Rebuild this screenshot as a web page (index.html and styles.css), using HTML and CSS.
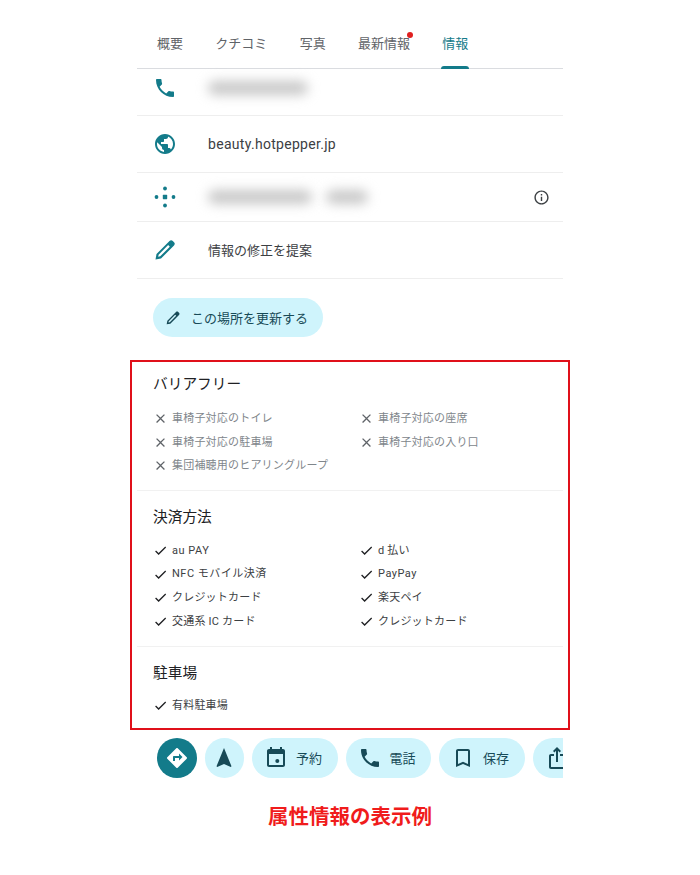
FILE: index.html
```html
<!DOCTYPE html>
<html lang="ja">
  <head>
    <meta charset="UTF-8" />
    <title>属性情報の表示例</title>
    <link rel="stylesheet" href="styles.css">
  </head>
  <body>
    <div class="page">
      <!-- タブ -->
      <nav class="tabs">
        <a href="#">概要</a>
        <a href="#">クチコミ</a>
        <a href="#">写真</a>
        <a href="#" class="has-dot">最新情報</a>
        <a href="#" class="active">情報</a>
      </nav>

      <!-- 基本情報 -->
      <ul class="rows">
        <li class="row row-phone">
          <svg class="row-icon" viewBox="0 0 24 24"><path d="M6.62 10.79c1.44 2.83 3.76 5.14 6.59 6.59l2.2-2.2c.27-.27.67-.36 1.02-.24 1.12.37 2.33.57 3.57.57.55 0 1 .45 1 1V20c0 .55-.45 1-1 1-9.39 0-17-7.61-17-17 0-.55.45-1 1-1h3.5c.55 0 1 .45 1 1 0 1.25.2 2.45.57 3.57.11.35.03.74-.25 1.02l-2.2 2.2z"/></svg>
          <span class="blur blur-a"></span>
        </li>
        <li class="row row-web">
          <svg class="row-icon" viewBox="0 0 24 24"><path d="M12 2C6.48 2 2 6.48 2 12s4.48 10 10 10 10-4.48 10-10S17.52 2 12 2zm-1 17.93c-3.95-.49-7-3.85-7-7.93 0-.62.08-1.21.21-1.79L9 15v1c0 1.1.9 2 2 2v1.93zm6.9-2.54c-.26-.81-1-1.39-1.9-1.39h-1v-3c0-.55-.45-1-1-1H8v-2h2c.55 0 1-.45 1-1V7h2c1.1 0 2-.9 2-2v-.41c2.93 1.19 5 4.06 5 7.41 0 2.08-.8 3.97-2.1 5.39z"/></svg>
          <span class="row-text latin">beauty.hotpepper.jp</span>
        </li>
        <li class="row row-code">
          <svg class="row-icon" viewBox="0 0 24 24"><circle cx="12" cy="3.5" r="1.9"/><circle cx="3.5" cy="12" r="1.9"/><circle cx="20.5" cy="12" r="1.9"/><circle cx="12" cy="20.5" r="1.9"/><rect x="9.8" y="9.8" width="4.4" height="4.4" rx=".6"/></svg>
          <span class="blur blur-b"></span>
          <span class="blur blur-c"></span>
          <svg class="info-icon" viewBox="0 0 24 24"><path d="M11 7h2v2h-2zm0 4h2v6h-2zm1-9C6.48 2 2 6.48 2 12s4.48 10 10 10 10-4.48 10-10S17.52 2 12 2zm0 18c-4.41 0-8-3.59-8-8s3.59-8 8-8 8 3.59 8 8-3.59 8-8 8z"/></svg>
        </li>
        <li class="row row-edit">
          <svg class="row-icon" viewBox="0 0 24 24"><path fill-rule="evenodd" d="M2.5 21.5L3.5 16 16.5 3c1-1 2.3-1 3.3 0L21 4.2c1 1 1 2.3 0 3.3L8 20.5zM5.2 18.8l2-.5 9.6-9.6-1.6-1.6-9.6 9.6z"/></svg>
          <span class="row-text">情報の修正を提案</span>
        </li>
      </ul>

      <a href="#" class="update-btn">
        <svg viewBox="0 0 24 24"><path fill-rule="evenodd" d="M2.5 21.5L3.5 16 16.5 3c1-1 2.3-1 3.3 0L21 4.2c1 1 1 2.3 0 3.3L8 20.5zM5.2 18.8l2-.5 9.6-9.6-1.6-1.6-9.6 9.6z"/></svg>
        この場所を更新する
      </a>

      <!-- 属性情報(赤枠) -->
      <div class="attr-box">
        <section class="attr attr-first">
          <h2>バリアフリー</h2>
          <ul class="attr-list off">
            <li><svg viewBox="0 0 24 24"><path d="M19 6.41L17.59 5 12 10.59 6.41 5 5 6.41 10.59 12 5 17.59 6.41 19 12 13.41 17.59 19 19 17.59 13.41 12z"/></svg>車椅子対応のトイレ</li>
            <li><svg viewBox="0 0 24 24"><path d="M19 6.41L17.59 5 12 10.59 6.41 5 5 6.41 10.59 12 5 17.59 6.41 19 12 13.41 17.59 19 19 17.59 13.41 12z"/></svg>車椅子対応の座席</li>
            <li><svg viewBox="0 0 24 24"><path d="M19 6.41L17.59 5 12 10.59 6.41 5 5 6.41 10.59 12 5 17.59 6.41 19 12 13.41 17.59 19 19 17.59 13.41 12z"/></svg>車椅子対応の駐車場</li>
            <li><svg viewBox="0 0 24 24"><path d="M19 6.41L17.59 5 12 10.59 6.41 5 5 6.41 10.59 12 5 17.59 6.41 19 12 13.41 17.59 19 19 17.59 13.41 12z"/></svg>車椅子対応の入り口</li>
            <li><svg viewBox="0 0 24 24"><path d="M19 6.41L17.59 5 12 10.59 6.41 5 5 6.41 10.59 12 5 17.59 6.41 19 12 13.41 17.59 19 19 17.59 13.41 12z"/></svg>集団補聴用のヒアリングループ</li>
          </ul>
        </section>
        <section class="attr attr-pay">
          <h2>決済方法</h2>
          <ul class="attr-list">
            <li><svg viewBox="0 0 24 24"><path d="M9 16.17L4.83 12l-1.42 1.41L9 19 21 7l-1.41-1.41z"/></svg><span class="wide">au PAY</span></li>
            <li><svg viewBox="0 0 24 24"><path d="M9 16.17L4.83 12l-1.42 1.41L9 19 21 7l-1.41-1.41z"/></svg>d 払い</li>
            <li><svg viewBox="0 0 24 24"><path d="M9 16.17L4.83 12l-1.42 1.41L9 19 21 7l-1.41-1.41z"/></svg><span class="wide">NFC モバイル決済</span></li>
            <li><svg viewBox="0 0 24 24"><path d="M9 16.17L4.83 12l-1.42 1.41L9 19 21 7l-1.41-1.41z"/></svg><span class="wide">PayPay</span></li>
            <li><svg viewBox="0 0 24 24"><path d="M9 16.17L4.83 12l-1.42 1.41L9 19 21 7l-1.41-1.41z"/></svg>クレジットカード</li>
            <li><svg viewBox="0 0 24 24"><path d="M9 16.17L4.83 12l-1.42 1.41L9 19 21 7l-1.41-1.41z"/></svg>楽天ペイ</li>
            <li><svg viewBox="0 0 24 24"><path d="M9 16.17L4.83 12l-1.42 1.41L9 19 21 7l-1.41-1.41z"/></svg>交通系 IC カード</li>
            <li><svg viewBox="0 0 24 24"><path d="M9 16.17L4.83 12l-1.42 1.41L9 19 21 7l-1.41-1.41z"/></svg>クレジットカード</li>
          </ul>
        </section>
        <section class="attr attr-last">
          <h2>駐車場</h2>
          <ul class="attr-list">
            <li><svg viewBox="0 0 24 24"><path d="M9 16.17L4.83 12l-1.42 1.41L9 19 21 7l-1.41-1.41z"/></svg>有料駐車場</li>
          </ul>
        </section>
      </div>

      <!-- 下部アクション -->
      <div class="actions">
        <a href="#" class="act act-round act-main">
          <svg viewBox="0 0 24 24"><path d="M21.71 11.29l-9-9c-.39-.39-1.02-.39-1.41 0l-9 9c-.39.39-.39 1.02 0 1.41l9 9c.39.39 1.02.39 1.41 0l9-9c.39-.38.39-1.01 0-1.41zM14 14.5V12h-4v3H8v-4c0-.55.45-1 1-1h5V7.5l3.5 3.5-3.5 3.5z"/></svg>
        </a>
        <a href="#" class="act act-round">
          <svg viewBox="0 0 24 24"><path d="M12 2L4.5 20.29l.71.71L12 18l6.79 3 .71-.71z"/></svg>
        </a>
        <a href="#" class="act act-pill">
          <svg viewBox="0 0 24 24"><path d="M19 3h-1V1h-2v2H8V1H6v2H5c-1.11 0-1.99.9-1.99 2L3 19c0 1.1.89 2 2 2h14c1.1 0 2-.9 2-2V5c0-1.1-.9-2-2-2zm0 16H5V8h14v11z"/><circle cx="13.3" cy="15" r="2"/></svg>
          予約
        </a>
        <a href="#" class="act act-pill">
          <svg viewBox="0 0 24 24"><path d="M6.62 10.79c1.44 2.83 3.76 5.14 6.59 6.59l2.2-2.2c.27-.27.67-.36 1.02-.24 1.12.37 2.33.57 3.57.57.55 0 1 .45 1 1V20c0 .55-.45 1-1 1-9.39 0-17-7.61-17-17 0-.55.45-1 1-1h3.5c.55 0 1 .45 1 1 0 1.25.2 2.45.57 3.57.11.35.03.74-.25 1.02l-2.2 2.2z"/></svg>
          電話
        </a>
        <a href="#" class="act act-pill">
          <svg viewBox="0 0 24 24"><path d="M17 3H7c-1.1 0-1.99.9-1.99 2L5 21l7-3 7 3V5c0-1.1-.9-2-2-2zm0 15l-5-2.18L7 18V5h10v13z"/></svg>
          保存
        </a>
        <a href="#" class="act act-pill">
          <svg viewBox="0 0 24 24"><path d="M16 5l-1.42 1.42-1.59-1.59V16h-1.98V4.83L9.42 6.42 8 5l4-4 4 4zm4 5v11c0 1.1-.9 2-2 2H6c-1.11 0-2-.9-2-2V10c0-1.11.89-2 2-2h3v2H6v11h12V10h-3V8h3c1.1 0 2 .89 2 2z"/></svg>
        </a>
      </div>

      <p class="caption">属性情報の表示例</p>
    </div>
  </body>
</html>
```

FILE: styles.css
```css
/* 初期化 */
html,
body,
ul,
h2,
p {
  margin: 0;
  padding: 0;
}
ul {
  list-style: none;
}
a {
  text-decoration: none;
  color: inherit;
}
body {
  background-color: #fff;
  font-family: "Roboto", "Noto Sans CJK JP", sans-serif;
  color: #202124;
}

/* 全体 */
.page {
  width: 426px;
  margin: 0 auto;
  padding: 22px 0 0;
}

/* タブ */
.tabs {
  display: flex;
  gap: 32.3px;
  height: 46px;
  padding-left: 20px;
  border-bottom: 1px solid #dadce0;
}
.tabs a {
  position: relative;
  font-size: 13px;
  line-height: 44px;
  color: #5f6368;
}
.tabs .active {
  color: #137b8a;
}
.tabs .active::after {
  content: '';
  position: absolute;
  left: -1px;
  right: -1px;
  bottom: -1px;
  height: 3px;
  border-radius: 3px 3px 0 0;
  background-color: #137b8a;
}
.tabs .has-dot::after {
  content: '';
  position: absolute;
  top: 10px;
  right: -3px;
  width: 6px;
  height: 6px;
  border-radius: 50%;
  background-color: #e02020;
}

/* 基本情報 */
.row {
  display: flex;
  align-items: center;
  border-bottom: 1px solid #eeeeee;
  box-sizing: border-box;
  padding-left: 16px;
}
.row-phone {
  height: 47px;
  padding-bottom: 9px;
}
.row-web {
  height: 57px;
}
.row-code {
  height: 49px;
}
.row-edit {
  height: 57px;
  padding-bottom: 1px;
}
.row-icon {
  width: 24px;
  height: 24px;
  margin-right: 31px;
  fill: #137b8a;
}
.row-text {
  font-size: 13px;
  color: #3c4043;
}
.latin {
  font-size: 14px;
  letter-spacing: 0.3px;
}
/* ぼかし(電話番号など) */
.blur {
  display: block;
  height: 14px;
  background-color: #c8c8c8;
  border-radius: 7px;
  filter: blur(6px);
}
.blur-a {
  width: 100px;
}
.blur-b {
  width: 104px;
}
.blur-c {
  width: 42px;
  margin-left: 14px;
}
.info-icon {
  width: 17px;
  height: 17px;
  margin-left: auto;
  margin-right: 13px;
  fill: #3c4043;
}

/* 更新ボタン */
.update-btn {
  display: flex;
  align-items: center;
  gap: 10px;
  width: 170px;
  height: 39px;
  margin: 19px 0 23px 16px;
  padding-left: 12px;
  box-sizing: border-box;
  border-radius: 20px;
  background-color: #cff4fc;
  font-size: 13px;
  color: #174a57;
}
.update-btn svg {
  width: 16px;
  height: 16px;
  fill: #174a57;
}

/* 赤枠 */
.attr-box {
  margin: 0 -7px;
  padding: 0 5px;
  border: 2px solid #e0101a;
}
.attr {
  padding: 15px 16px 13px;
  border-bottom: 1px solid #f1f1f1;
}
.attr-first {
  padding-top: 11px;
  padding-bottom: 12px;
}
.attr-last {
  padding-bottom: 10px;
  border-bottom: 0;
}
.attr h2 {
  font-size: 14.7px;
  font-weight: 400;
  line-height: 22px;
  color: #202124;
}
.attr-list {
  display: grid;
  grid-template-columns: 206px 1fr;
  margin-top: 11px;
  font-size: 11px;
  line-height: 23.6px;
  letter-spacing: 0.2px;
  color: #3c4043;
}
.attr-first .attr-list {
  margin-top: 12px;
}
.attr-last .attr-list {
  margin-top: 10px;
}
.attr-list li {
  display: flex;
  align-items: center;
  gap: 4px;
}
.attr-list svg {
  width: 15px;
  height: 15px;
  fill: #202124;
}
.attr-list .wide {
  letter-spacing: 0.5px;
}
.off {
  color: #80868b;
}
.off svg {
  fill: #5f6368;
}

/* 下部アクション */
.actions {
  display: flex;
  gap: 8px;
  margin-top: 8px;
  padding-left: 20px;
  overflow: hidden;
}
.act {
  display: flex;
  flex: none;
  align-items: center;
  height: 40px;
  border-radius: 20px;
  background-color: #cff4fc;
  font-size: 13px;
  color: #174a57;
}
.act svg {
  width: 24px;
  height: 24px;
  fill: #174a57;
}
.act-round {
  justify-content: center;
  width: 39.5px;
}
.act-main {
  background-color: #137b8a;
}
.act-main svg {
  fill: #fff;
}
.act-pill {
  gap: 8px;
  width: 85.5px;
  padding-left: 12px;
  box-sizing: border-box;
}

/* キャプション */
.caption {
  margin-top: 24px;
  text-align: center;
  font-size: 20.5px;
  font-weight: 700;
  line-height: 30px;
  color: #f01c1c;
}
```
